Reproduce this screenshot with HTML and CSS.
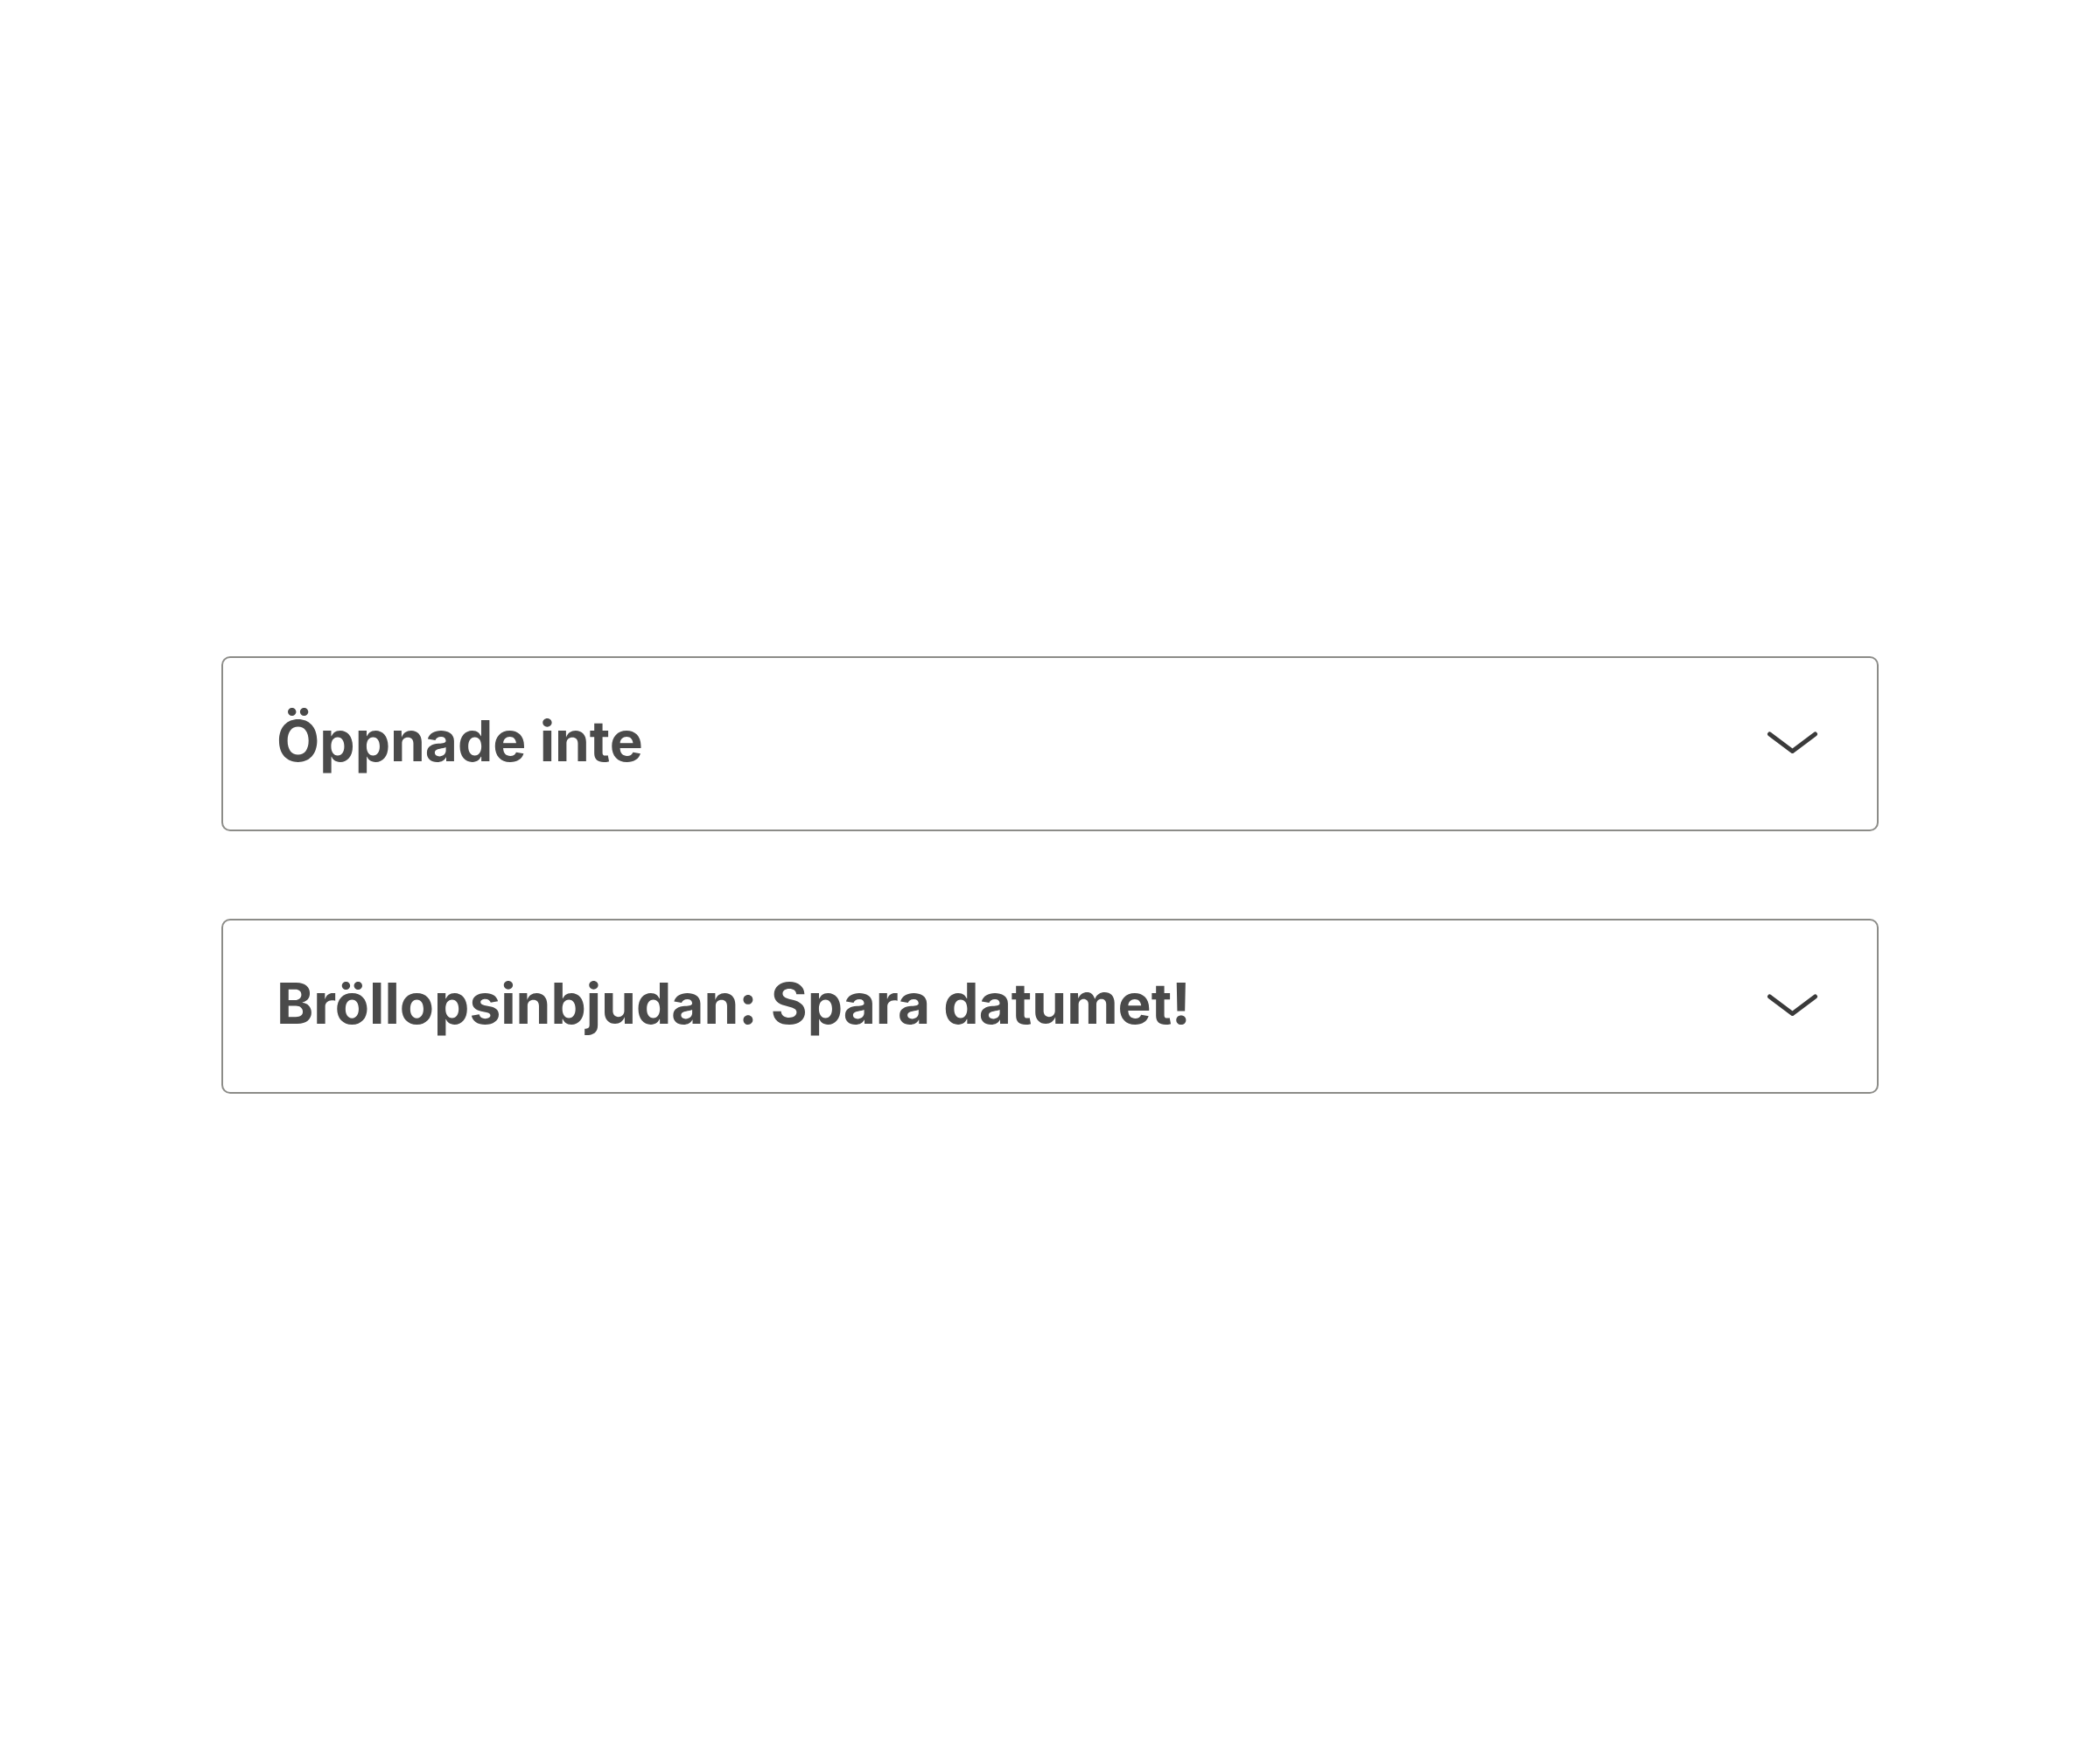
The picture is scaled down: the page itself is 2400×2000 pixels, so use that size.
FILE: index.html
```html
<html>
<head>
  <title>Meddelanden</title>
  <meta charset="utf-8">
  <meta name="viewport" content="width=device-width, initial-scale=1">
  <link rel="stylesheet" href="styles.css">
</head>
<body>

<section class="list">
  <div class="item">
    <span class="item-title">Öppnade inte</span>
    <svg class="chevron" width="60" height="30" viewBox="0 0 60 30">
      <polyline points="3.5,4 29.5,23.5 55.5,4" />
    </svg>
  </div>

  <div class="item">
    <span class="item-title">Bröllopsinbjudan: Spara datumet!</span>
    <svg class="chevron" width="60" height="30" viewBox="0 0 60 30">
      <polyline points="3.5,4 29.5,23.5 55.5,4" />
    </svg>
  </div>
</section>

</body>
</html>
```

FILE: styles.css
```css
* {
  box-sizing: border-box;
}

body {
  margin: 0;
  background: #fff;
  font-family: Inter, "Noto Sans", sans-serif;
}

/* the two collapsed rows */
.list {
  width: 1894px;
  margin: 0 auto;
  padding-top: 750px;
  display: flex;
  flex-direction: column;
  gap: 100px;
}

.item {
  height: 200px;
  border: 2px solid #8c8c88;
  border-radius: 10px;
  display: flex;
  align-items: center;
  justify-content: space-between;
  padding: 0 66px 0 61px;
}

.item-title {
  font-size: 64px;
  line-height: 1;
  font-weight: 700;
  color: #4a4a4a;
  margin-bottom: 6px;
}

.chevron polyline {
  fill: none;
  stroke: #3a3a3a;
  stroke-width: 5;
  stroke-linecap: round;
  stroke-linejoin: round;
}
```
